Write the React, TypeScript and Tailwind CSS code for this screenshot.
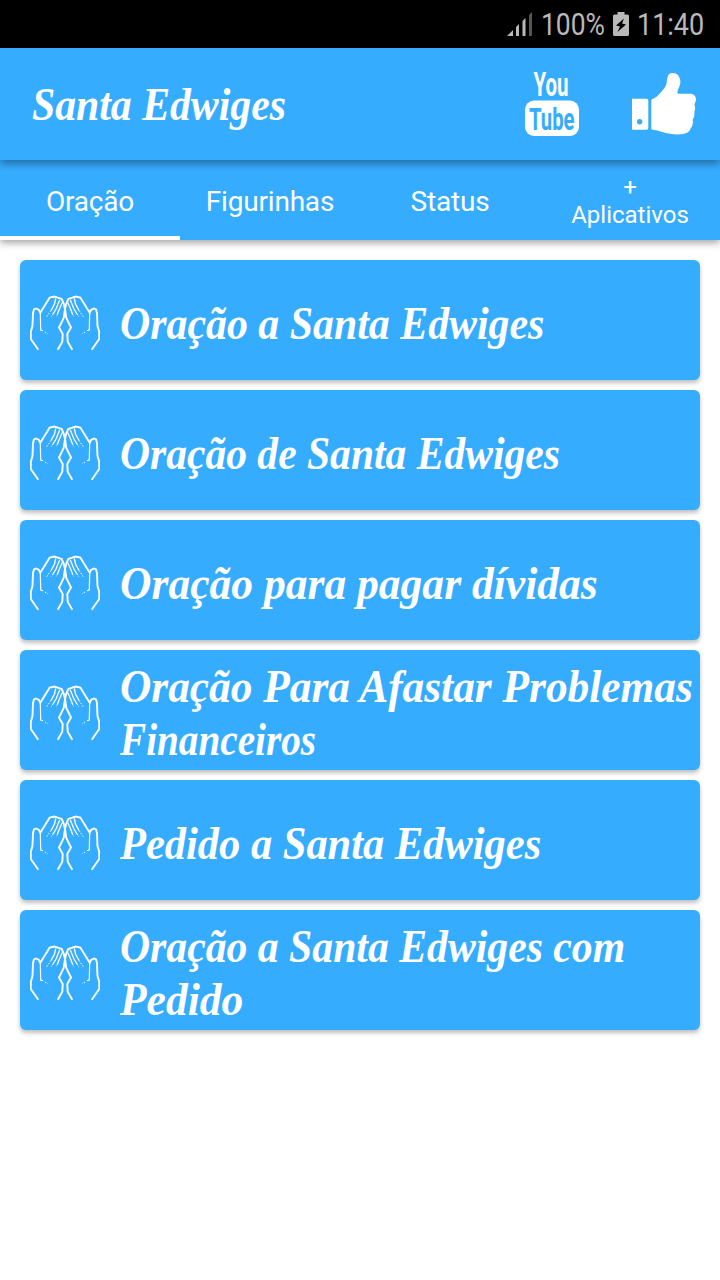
import React, { useLayoutEffect, useRef, useState } from 'react';

interface Line {
  text: string;
  width: number;
}

const tabs = ['Oração', 'Figurinhas', 'Status'];

const prayers: Line[][] = [
  [{ text: 'Oração a Santa Edwiges', width: 424 }],
  [{ text: 'Oração de Santa Edwiges', width: 440 }],
  [{ text: 'Oração para pagar dívidas', width: 478 }],
  [
    { text: 'Oração Para Afastar Problemas', width: 573 },
    { text: 'Financeiros', width: 196 },
  ],
  [{ text: 'Pedido a Santa Edwiges', width: 421 }],
  [
    { text: 'Oração a Santa Edwiges com', width: 505 },
    { text: 'Pedido', width: 123 },
  ],
];

// Squeezes a line of text horizontally so that it fills the given width
function FitText({ text, width }: Line) {
  const ref = useRef<HTMLSpanElement>(null);
  const [scale, setScale] = useState(1);

  useLayoutEffect(() => {
    if (ref.current) {
      setScale(width / ref.current.offsetWidth);
    }
  }, [text, width]);

  return (
    <span className="block" style={{ width }}>
      <span
        ref={ref}
        className="inline-block origin-left whitespace-nowrap"
        style={{ transform: `scaleX(${scale})` }}
      >
        {text}
      </span>
    </span>
  );
}

function SignalIcon() {
  return (
    <svg width="26" height="24" viewBox="0 0 26 24" fill="#b9b9b9">
      <path d="M0 24L6 18V24Z M9 15L12 12V24H9Z M15.500 9L18.500 6V24H15.500Z" />
      <path d="M22 3L25 0V24H22Z" fill="#555" />
    </svg>
  );
}

function BatteryIcon() {
  return (
    <svg width="16" height="24" viewBox="0 0 16 24">
      <path
        d="M4.500 0H11.500V2.500H14.500Q16 2.500 16 4V22.500Q16 24 14.500 24H1.500Q0 24 0 22.500V4Q0 2.500 1.500 2.500H4.500Z"
        fill="#b9b9b9"
      />
      <path d="M11 6.500L3 13.500L7 14.500L4.500 20L13 12.500L9 11.500Z" fill="#000" />
    </svg>
  );
}

function YoutubeIcon() {
  return (
    <svg
      width="64"
      height="64"
      viewBox="0 0 64 64"
      className="font-['Roboto'] font-bold overflow-visible"
    >
      <text x="13.500" y="24.300" fontSize="33" textLength="35" lengthAdjust="spacingAndGlyphs" fill="#fff">
        You
      </text>
      <rect x="5" y="28.500" width="54" height="35.500" rx="9" fill="#fff" />
      <text x="9" y="57.500" fontSize="31" textLength="45.500" lengthAdjust="spacingAndGlyphs" fill="#36acff">
        Tube
      </text>
    </svg>
  );
}

function LikeIcon() {
  return (
    <svg width="64" height="64" viewBox="0 0 64 64" fill="#fff">
      <path
        fillRule="evenodd"
        d="M0 26.700H14.500Q16.300 26.700 16.300 28.500V56Q16.300 57.700 14.500 57.700H0Z M7.700 47A2.700 2.700 0 1 0 7.700 52.400A2.700 2.700 0 1 0 7.700 47Z"
      />
      <path d="M19.300 28.700C19.300 26.800 22.500 26.500 24.700 24.700C28 21.500 31.500 17.500 33.700 14C35.300 11 34.500 7.500 35.700 4.700C36.500 2 38 1 40.300 1C44 1 46 2.500 47 4.700C48.200 7 48.600 9 48.300 11.300C47.800 15 45.300 18 45.400 20.500Q45.500 21.800 47 21.700H59C62 22 64 24.500 64 27.300C64 30 62.600 30.800 62.500 33C63.500 36 63.300 37.800 62.300 39.700C62.600 43 62.500 45 60.700 47.300C61.200 51 60.700 54 58.700 56.300C57.500 60 55 61.500 51.300 62C46 62.800 40 62.500 34.700 61.300C30 60.200 25.500 57.800 20.500 57.700Q19.300 57.500 19.300 56.500Z" />
    </svg>
  );
}

function Hand() {
  return (
    <>
      <path d="M8.300 64.700L.8 54V46.700L2.500 41L3 28L4 24.500L6 23.500L9 25L10.300 27.700L19.700 12.500L24.300 11.500L27.700 12.700L31.700 14L33.700 18.500L35 24L33.700 33L29 42.500L32.700 49L32.300 56.700L27.700 64.700" strokeWidth="1.900" />
      <path d="M10.300 27.700L10.700 45L13 45.700" strokeWidth="1.200" />
      <path d="M25.700 13.500L24.500 19L21 25.500M29.700 15L26 24L23 29M32.300 17.500L29 25L27.500 29" strokeWidth="1.300" />
      <path d="M21 25.500L16.500 32M23 29L21 32M15 47L18 49M27.500 29L26 32" strokeWidth="1" strokeDasharray="1.500 1.500" />
    </>
  );
}

function HandsIcon() {
  return (
    <svg width="70" height="70" viewBox="0 0 70 70" fill="none" stroke="#fff" className="shrink-0">
      <Hand />
      <g transform="translate(70 0) scale(-1 1)">
        <Hand />
      </g>
    </svg>
  );
}

export default function App() {
  return (
    <div className="w-[720px] h-[1280px] bg-white text-white font-['Roboto',sans-serif] overflow-hidden">
      {/* Status bar */}
      <div className="h-12 bg-black text-[#b9b9b9] flex items-center justify-end pr-4 text-[31px] leading-none">
        <SignalIcon />
        <div className="ml-2 mr-2">
          <FitText text="100%" width={64} />
        </div>
        <BatteryIcon />
        <div className="ml-2">
          <FitText text="11:40" width={67} />
        </div>
      </div>

      {/* Toolbar */}
      <header className="relative z-20 h-28 bg-[#36acff] flex items-center pl-8 pr-6 shadow-[0_4px_8px_rgba(0,0,0,0.35)]">
        <h1 className="flex-1 font-['Liberation_Serif',serif] font-bold italic text-[46px] leading-[53px]">
          <FitText text="Santa Edwiges" width={254} />
        </h1>
        <div className="flex gap-12">
          <YoutubeIcon />
          <LikeIcon />
        </div>
      </header>

      {/* Tabs */}
      <nav className="relative z-10 h-20 bg-[#36acff] grid grid-cols-4 shadow-[0_3px_7px_rgba(0,0,0,0.35)]">
        {tabs.map((tab, index) => (
          <div
            key={tab}
            className={`flex items-center justify-center text-[28px] tracking-[-0.2px] border-b-4 pt-2 ${
              index === 0 ? 'border-white' : 'border-transparent'
            }`}
          >
            {tab}
          </div>
        ))}
        <div className="flex flex-col items-center justify-center pt-0.5 text-2xl leading-7">
          <span>+</span>
          <span>Aplicativos</span>
        </div>
      </nav>

      {/* Prayers */}
      <main className="px-5 pt-5 flex flex-col gap-[10px]">
        {prayers.map((lines) => (
          <div
            key={lines[0].text}
            className="h-[120px] rounded-[6px] bg-[#36acff] flex items-center pl-[10px] shadow-[0_3px_4px_rgba(0,0,0,0.25)]"
          >
            <HandsIcon />
            <div className="ml-5 pt-1.5 font-['Liberation_Serif',serif] font-bold italic text-[46px] leading-[53px]">
              {lines.map((line) => (
                <FitText key={line.text} {...line} />
              ))}
            </div>
          </div>
        ))}
      </main>
    </div>
  );
}
